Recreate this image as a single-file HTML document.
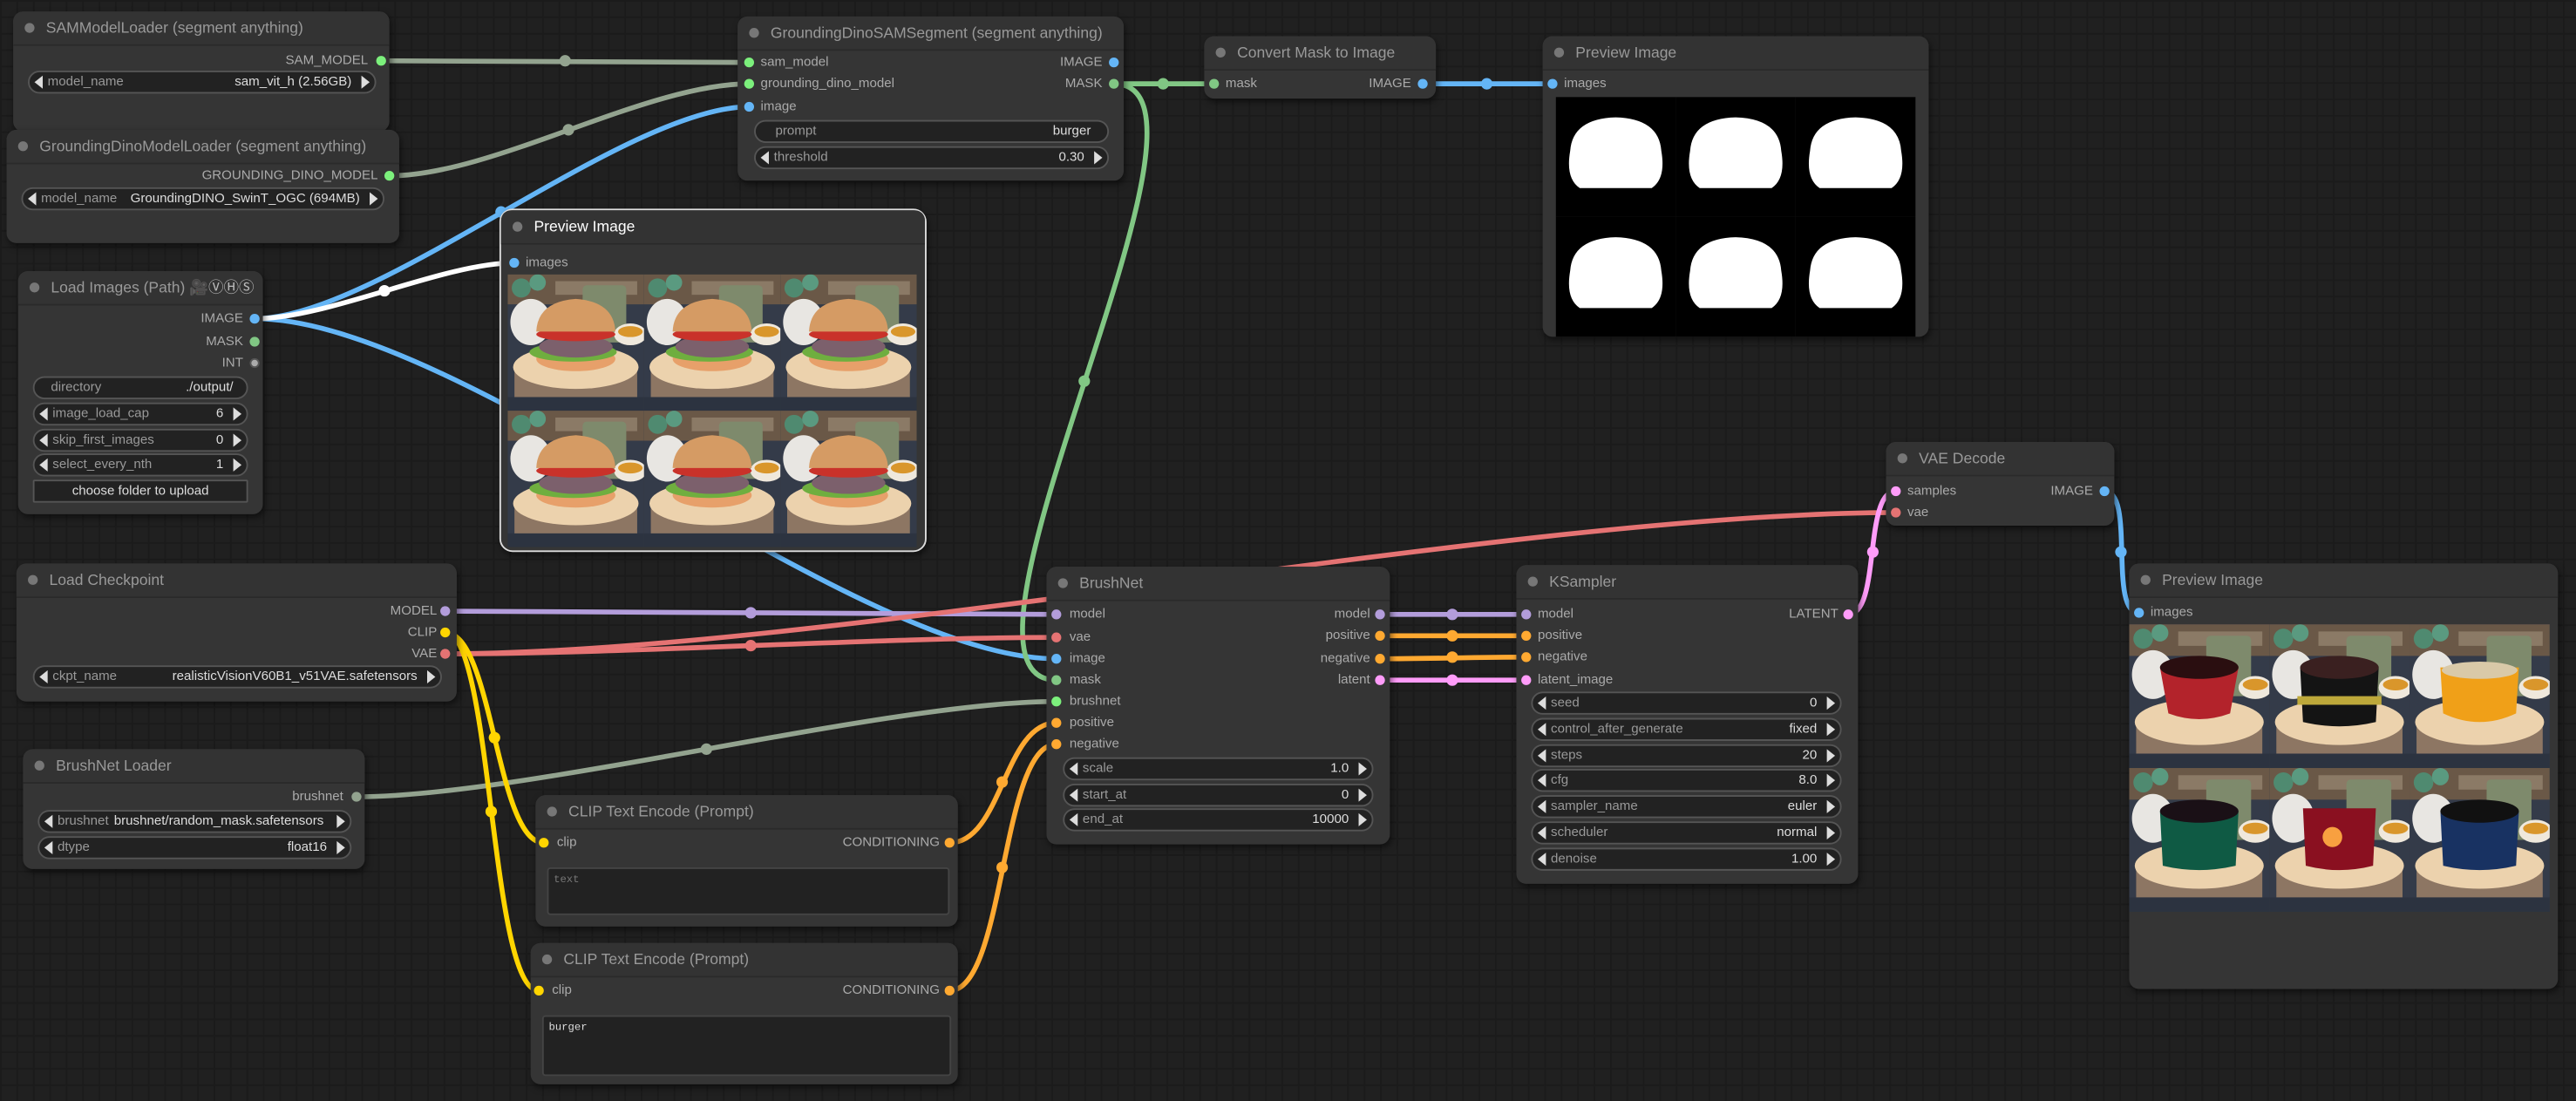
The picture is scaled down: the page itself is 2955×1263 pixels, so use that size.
<!DOCTYPE html>
<html><head><meta charset="utf-8"><style>
html,body{margin:0;padding:0;background:#202020;overflow:hidden;width:2955px;height:1262px}
#w{position:absolute;left:0;top:0;width:1568px;height:670px;transform:scale(1.884566);transform-origin:0 0;font-family:"Liberation Sans",sans-serif;
background-color:#202020;background-image:linear-gradient(#1b1b1b 1px,transparent 1px),linear-gradient(90deg,#1b1b1b 1px,transparent 1px);background-size:10px 10px}
.n{position:absolute;z-index:1;background:#353535;border-radius:6px;box-shadow:1px 2px 4px rgba(0,0,0,.5)}
.n .t{position:absolute;left:0;right:0;top:0;height:20px;background:#333;border-bottom:1px solid #2a2a2a;border-radius:6px 6px 0 0;color:#999;font-size:9.3px;line-height:20px;padding-left:20px;white-space:nowrap}
.n .t:before{content:"";position:absolute;left:7px;top:7px;width:6px;height:6px;border-radius:50%;background:#777}
.d{position:absolute;width:6px;height:6px;border-radius:50%;margin:-3px 0 0 -3px;z-index:3}
.l{position:absolute;font-size:8px;color:#aaa;line-height:10px;margin-top:-5px;white-space:nowrap;z-index:3}
.w{position:absolute;height:12px;background:#222;border:1px solid #555;border-radius:7px;font-size:8px;line-height:12px;color:#999;white-space:nowrap;z-index:3}
.w .a{position:absolute;left:11px}.w .v{position:absolute;right:14px;color:#ddd}
.w:before{content:"";position:absolute;left:3px;top:2px;border:4px solid transparent;border-right:5px solid #ddd;border-left:0}
.w:after{content:"";position:absolute;right:3px;top:2px;border:4px solid transparent;border-left:5px solid #ddd;border-right:0}
.w.nt:before,.w.nt:after{display:none}
.ta{position:absolute;z-index:3;background:#222;border:1px solid #444;border-radius:2px;color:#bbb;font-family:"Liberation Mono",monospace;font-size:6.5px;padding:3px}
svg.links{position:absolute;left:0;top:0;z-index:0}
</style></head><body><div id="w">
<svg width="0" height="0" style="position:absolute">
<defs>
<g id="bg">
<rect width="100" height="100" fill="#343b49"/>
<rect width="100" height="22" fill="#6a5847"/>
<rect x="35" y="5" width="60" height="10" fill="#8b7a66"/>
<ellipse cx="17" cy="35" rx="15" ry="17" fill="#e8e6e2"/>
<circle cx="10" cy="10" r="7" fill="#4f8a70"/><circle cx="22" cy="6" r="6" fill="#5a9a80"/>
<rect x="55" y="8" width="32" height="42" rx="3" fill="#7e8a6c"/>
<ellipse cx="90" cy="44" rx="12" ry="8" fill="#efe8dc"/><ellipse cx="90" cy="42" rx="9" ry="4" fill="#d9962b"/>
<rect x="5" y="68" width="90" height="22" fill="#8d7663"/>
<ellipse cx="50" cy="68" rx="46" ry="16" fill="#ecd2ad"/>
<rect x="0" y="90" width="100" height="10" fill="#2c3340"/>
</g>
<g id="bur"><use href="#bg"/>
<ellipse cx="50" cy="62" rx="29" ry="9" fill="#e7a06a"/>
<ellipse cx="48" cy="57" rx="32" ry="7" fill="#6fae3f"/>
<ellipse cx="50" cy="53" rx="27" ry="8" fill="#7c606c"/>
<ellipse cx="50" cy="44" rx="29" ry="5" fill="#c9322a"/>
<path d="M21 42 Q22 20 50 18 Q78 20 79 42 Z" fill="#d59b64"/>
</g>
<g id="mask"><rect width="100" height="100" fill="#000"/>
<path d="M12 45 Q14 18 50 17 Q86 18 88 45 Q92 68 80 76 L20 76 Q8 68 12 45Z" fill="#fff"/></g>
</defs></svg>

<svg class="links" width="1568" height="670" fill="none" stroke-width="3" stroke-linecap="round">
<path d="M232 37 C288 37 400 38 456 38" stroke="#93a38f"/>
<path d="M237 107 C300 107 393 51 456 51" stroke="#93a38f"/>
<path d="M217 485 C320 485 540 427 643 427" stroke="#93a38f"/>
<path d="M155 194 C230 194 380 65 456 65" stroke="#64b5f6"/>
<path d="M155 194 C280 194 520 401 643 401" stroke="#64b5f6"/>
<path d="M155 194 C200 194 270 160 313 160" stroke="#fff"/>
<path d="M678 51 C700 51 717 51 739 51" stroke="#81c784"/>
<path d="M678 51 C760 51 560 414 643 414" stroke="#81c784"/>
<path d="M866 51 C890 51 921 51 945 51" stroke="#64b5f6"/>
<path d="M271 372 C380 372 534 374 643 374" stroke="#b39ddb"/>
<path d="M271 398 C380 398 534 388 643 388" stroke="#e57373"/>
<path d="M271 398 C500 398 924 312 1154 312" stroke="#e57373"/>
<path d="M271 385 C300 385 302 513 331 513" stroke="#ffd500"/>
<path d="M271 385 C300 385 298 603 328 603" stroke="#ffd500"/>
<path d="M578 513 C610 513 611 440 643 440" stroke="#ffa931"/>
<path d="M578 603 C612 603 609 453 643 453" stroke="#ffa931"/>
<path d="M840 374 C870 374 898 374 929 374" stroke="#b39ddb"/>
<path d="M840 387 C870 387 898 387 929 387" stroke="#ffa931"/>
<path d="M840 401 C870 401 898 400 929 400" stroke="#ffa931"/>
<path d="M840 414 C870 414 898 414 929 414" stroke="#ff9cf9"/>
<path d="M1125 374 C1145 374 1134 299 1154 299" stroke="#ff9cf9"/>
<path d="M1281 299 C1300 299 1283 373 1302 373" stroke="#64b5f6"/>
<g stroke="none">
<circle cx="344" cy="37" r="3.5" fill="#93a38f"/><circle cx="346" cy="79" r="3.5" fill="#93a38f"/><circle cx="430" cy="456" r="3.5" fill="#93a38f"/>
<circle cx="305" cy="129" r="3.5" fill="#64b5f6"/><circle cx="234" cy="177" r="3.5" fill="#fff"/>
<circle cx="708" cy="51" r="3.5" fill="#81c784"/><circle cx="660" cy="232" r="3.5" fill="#81c784"/><circle cx="905" cy="51" r="3.5" fill="#64b5f6"/>
<circle cx="457" cy="373" r="3.5" fill="#b39ddb"/><circle cx="457" cy="393" r="3.5" fill="#e57373"/>
<circle cx="301" cy="449" r="3.5" fill="#ffd500"/><circle cx="299" cy="494" r="3.5" fill="#ffd500"/>
<circle cx="610" cy="476" r="3.5" fill="#ffa931"/><circle cx="610" cy="528" r="3.5" fill="#ffa931"/>
<circle cx="884" cy="374" r="3.5" fill="#b39ddb"/><circle cx="884" cy="387" r="3.5" fill="#ffa931"/><circle cx="884" cy="400" r="3.5" fill="#ffa931"/><circle cx="884" cy="414" r="3.5" fill="#ff9cf9"/>
<circle cx="1140" cy="336" r="3.5" fill="#ff9cf9"/><circle cx="1291" cy="336" r="3.5" fill="#64b5f6"/>
</g>
</svg>

<div class="n" style="left:8px;top:7px;width:229px;height:73px"><div class="t">SAMModelLoader (segment anything)</div></div>
<div class="l" style="right:1344px;top:37px">SAM_MODEL</div><div class="d" style="left:232px;top:37px;background:#7cf07c"></div>
<div class="w" style="left:17px;top:43px;width:210px"><span class="a">model_name</span><span class="v">sam_vit_h (2.56GB)</span></div>

<div class="n" style="left:4px;top:79px;width:239px;height:69px"><div class="t">GroundingDinoModelLoader (segment anything)</div></div>
<div class="l" style="right:1338px;top:107px">GROUNDING_DINO_MODEL</div><div class="d" style="left:237px;top:107px;background:#7cf07c"></div>
<div class="w" style="left:13px;top:114px;width:219px"><span class="a">model_name</span><span class="v">GroundingDINO_SwinT_OGC (694MB)</span></div>

<div class="n" style="left:449px;top:10px;width:235px;height:100px"><div class="t">GroundingDinoSAMSegment (segment anything)</div></div>
<div class="d" style="left:456px;top:38px;background:#7cf07c"></div><div class="l" style="left:463px;top:38px">sam_model</div>
<div class="d" style="left:456px;top:51px;background:#7cf07c"></div><div class="l" style="left:463px;top:51px">grounding_dino_model</div>
<div class="d" style="left:456px;top:65px;background:#64b5f6"></div><div class="l" style="left:463px;top:65px">image</div>
<div class="l" style="right:897px;top:38px">IMAGE</div><div class="d" style="left:678px;top:38px;background:#64b5f6"></div>
<div class="l" style="right:897px;top:51px">MASK</div><div class="d" style="left:678px;top:51px;background:#81c784"></div>
<div class="w nt" style="left:459px;top:73px;width:214px"><span class="a" style="left:12px">prompt</span><span class="v" style="right:10px">burger</span></div>
<div class="w" style="left:459px;top:89px;width:214px"><span class="a">threshold</span><span class="v">0.30</span></div>

<div class="n" style="left:733px;top:22px;width:141px;height:38px"><div class="t">Convert Mask to Image</div></div>
<div class="d" style="left:739px;top:51px;background:#81c784"></div><div class="l" style="left:746px;top:51px">mask</div>
<div class="l" style="right:709px;top:51px">IMAGE</div><div class="d" style="left:866px;top:51px;background:#64b5f6"></div>

<div class="n" style="left:939px;top:22px;width:235px;height:183px"><div class="t">Preview Image</div></div>
<div class="d" style="left:945px;top:51px;background:#64b5f6"></div><div class="l" style="left:952px;top:51px">images</div>
<svg style="position:absolute;left:947px;top:59px;z-index:3" width="219" height="146" viewBox="0 0 300 200" preserveAspectRatio="none">
<use href="#mask"/><use href="#mask" x="100"/><use href="#mask" x="200"/><use href="#mask" y="100"/><use href="#mask" x="100" y="100"/><use href="#mask" x="200" y="100"/></svg>

<div class="n" style="left:11px;top:165px;width:149px;height:148px"><div class="t">Load Images (Path) 🎥<span style="color:#bbb">ⓋⒽⓈ</span></div></div>
<div class="l" style="right:1420px;top:194px">IMAGE</div><div class="d" style="left:155px;top:194px;background:#64b5f6"></div>
<div class="l" style="right:1420px;top:208px">MASK</div><div class="d" style="left:155px;top:208px;background:#81c784"></div>
<div class="l" style="right:1420px;top:221px">INT</div><div class="d" style="left:155px;top:221px;background:#aaa;border:1px solid #555;width:4px;height:4px"></div>
<div class="w nt" style="left:20px;top:229px;width:129px"><span class="a" style="left:10px">directory</span><span class="v" style="right:8px">./output/</span></div>
<div class="w" style="left:20px;top:245px;width:129px"><span class="a">image_load_cap</span><span class="v">6</span></div>
<div class="w" style="left:20px;top:261px;width:129px"><span class="a">skip_first_images</span><span class="v">0</span></div>
<div class="w" style="left:20px;top:276px;width:129px"><span class="a">select_every_nth</span><span class="v">1</span></div>
<div class="w nt" style="left:20px;top:292px;width:129px;border-radius:1px;text-align:center;color:#ddd">choose folder to upload</div>

<div class="n" style="left:304px;top:127px;width:258px;height:207px;border:1px solid #ddd;border-radius:8px"><div class="t" style="color:#fff">Preview Image</div></div>
<div class="d" style="left:313px;top:160px;background:#64b5f6"></div><div class="l" style="left:320px;top:160px">images</div>
<svg style="position:absolute;left:309px;top:167px;z-index:3" width="249" height="166" viewBox="0 0 300 200" preserveAspectRatio="none">
<use href="#bur"/><use href="#bur" x="100"/><use href="#bur" x="200"/><use href="#bur" y="100"/><use href="#bur" x="100" y="100"/><use href="#bur" x="200" y="100"/></svg>

<div class="n" style="left:10px;top:343px;width:268px;height:84px"><div class="t">Load Checkpoint</div></div>
<div class="l" style="right:1302px;top:372px">MODEL</div><div class="d" style="left:271px;top:372px;background:#b39ddb"></div>
<div class="l" style="right:1302px;top:385px">CLIP</div><div class="d" style="left:271px;top:385px;background:#ffd500"></div>
<div class="l" style="right:1302px;top:398px">VAE</div><div class="d" style="left:271px;top:398px;background:#e57373"></div>
<div class="w" style="left:20px;top:405px;width:247px"><span class="a">ckpt_name</span><span class="v">realisticVisionV60B1_v51VAE.safetensors</span></div>

<div class="n" style="left:14px;top:456px;width:208px;height:73px"><div class="t">BrushNet Loader</div></div>
<div class="l" style="right:1359px;top:485px">brushnet</div><div class="d" style="left:217px;top:485px;background:#93a38f"></div>
<div class="w" style="left:23px;top:493px;width:189px"><span class="a">brushnet</span><span class="v" style="color:#ddd;right:16px">brushnet/random_mask.safetensors</span></div>
<div class="w" style="left:23px;top:509px;width:189px"><span class="a">dtype</span><span class="v">float16</span></div>

<div class="n" style="left:326px;top:484px;width:257px;height:80px"><div class="t">CLIP Text Encode (Prompt)</div></div>
<div class="d" style="left:331px;top:513px;background:#ffd500"></div><div class="l" style="left:339px;top:513px">clip</div>
<div class="l" style="right:996px;top:513px">CONDITIONING</div><div class="d" style="left:578px;top:513px;background:#ffa931"></div>
<div class="ta" style="left:333px;top:528px;width:237px;height:21px;color:#777">text</div>

<div class="n" style="left:323px;top:574px;width:260px;height:86px"><div class="t">CLIP Text Encode (Prompt)</div></div>
<div class="d" style="left:328px;top:603px;background:#ffd500"></div><div class="l" style="left:336px;top:603px">clip</div>
<div class="l" style="right:996px;top:603px">CONDITIONING</div><div class="d" style="left:578px;top:603px;background:#ffa931"></div>
<div class="ta" style="left:330px;top:618px;width:241px;height:29px;color:#ddd">burger</div>

<div class="n" style="left:637px;top:345px;width:209px;height:169px"><div class="t">BrushNet</div></div>
<div class="d" style="left:643px;top:374px;background:#b39ddb"></div><div class="l" style="left:651px;top:374px">model</div>
<div class="d" style="left:643px;top:388px;background:#e57373"></div><div class="l" style="left:651px;top:388px">vae</div>
<div class="d" style="left:643px;top:401px;background:#64b5f6"></div><div class="l" style="left:651px;top:401px">image</div>
<div class="d" style="left:643px;top:414px;background:#81c784"></div><div class="l" style="left:651px;top:414px">mask</div>
<div class="d" style="left:643px;top:427px;background:#7cf07c"></div><div class="l" style="left:651px;top:427px">brushnet</div>
<div class="d" style="left:643px;top:440px;background:#ffa931"></div><div class="l" style="left:651px;top:440px">positive</div>
<div class="d" style="left:643px;top:453px;background:#ffa931"></div><div class="l" style="left:651px;top:453px">negative</div>
<div class="l" style="right:734px;top:374px">model</div><div class="d" style="left:840px;top:374px;background:#b39ddb"></div>
<div class="l" style="right:734px;top:387px">positive</div><div class="d" style="left:840px;top:387px;background:#ffa931"></div>
<div class="l" style="right:734px;top:401px">negative</div><div class="d" style="left:840px;top:401px;background:#ffa931"></div>
<div class="l" style="right:734px;top:414px">latent</div><div class="d" style="left:840px;top:414px;background:#ff9cf9"></div>
<div class="w" style="left:647px;top:461px;width:187px"><span class="a">scale</span><span class="v">1.0</span></div>
<div class="w" style="left:647px;top:477px;width:187px"><span class="a">start_at</span><span class="v">0</span></div>
<div class="w" style="left:647px;top:492px;width:187px"><span class="a">end_at</span><span class="v">10000</span></div>

<div class="n" style="left:923px;top:344px;width:208px;height:194px"><div class="t">KSampler</div></div>
<div class="d" style="left:929px;top:374px;background:#b39ddb"></div><div class="l" style="left:936px;top:374px">model</div>
<div class="d" style="left:929px;top:387px;background:#ffa931"></div><div class="l" style="left:936px;top:387px">positive</div>
<div class="d" style="left:929px;top:400px;background:#ffa931"></div><div class="l" style="left:936px;top:400px">negative</div>
<div class="d" style="left:929px;top:414px;background:#ff9cf9"></div><div class="l" style="left:936px;top:414px">latent_image</div>
<div class="l" style="right:449px;top:374px">LATENT</div><div class="d" style="left:1125px;top:374px;background:#ff9cf9"></div>
<div class="w" style="left:932px;top:421px;width:187px"><span class="a">seed</span><span class="v">0</span></div>
<div class="w" style="left:932px;top:437px;width:187px"><span class="a">control_after_generate</span><span class="v">fixed</span></div>
<div class="w" style="left:932px;top:453px;width:187px"><span class="a">steps</span><span class="v">20</span></div>
<div class="w" style="left:932px;top:468px;width:187px"><span class="a">cfg</span><span class="v">8.0</span></div>
<div class="w" style="left:932px;top:484px;width:187px"><span class="a">sampler_name</span><span class="v">euler</span></div>
<div class="w" style="left:932px;top:500px;width:187px"><span class="a">scheduler</span><span class="v">normal</span></div>
<div class="w" style="left:932px;top:516px;width:187px"><span class="a">denoise</span><span class="v">1.00</span></div>

<div class="n" style="left:1148px;top:269px;width:139px;height:51px"><div class="t">VAE Decode</div></div>
<div class="d" style="left:1154px;top:299px;background:#ff9cf9"></div><div class="l" style="left:1161px;top:299px">samples</div>
<div class="d" style="left:1154px;top:312px;background:#e57373"></div><div class="l" style="left:1161px;top:312px">vae</div>
<div class="l" style="right:294px;top:299px">IMAGE</div><div class="d" style="left:1281px;top:299px;background:#64b5f6"></div>

<div class="n" style="left:1296px;top:343px;width:261px;height:259px"><div class="t">Preview Image</div></div>
<div class="d" style="left:1302px;top:373px;background:#64b5f6"></div><div class="l" style="left:1309px;top:373px">images</div>
<svg style="position:absolute;left:1296px;top:380px;z-index:3" width="256" height="175" viewBox="0 0 300 200" preserveAspectRatio="none">
<use href="#bg"/><use href="#bg" x="100"/><use href="#bg" x="200"/><use href="#bg" y="100"/><use href="#bg" x="100" y="100"/><use href="#bg" x="200" y="100"/>
<path d="M22 30 L78 30 L72 62 Q50 70 28 62 Z" fill="#b3232b"/><ellipse cx="50" cy="30" rx="28" ry="8" fill="#2a0e10"/>
<path d="M122 30 L178 30 L176 68 Q150 74 124 68 Z" fill="#141414"/><ellipse cx="150" cy="30" rx="28" ry="8" fill="#3a2020"/><rect x="120" y="50" width="60" height="6" fill="#bda83a"/>
<path d="M222 30 L278 30 L276 62 Q250 74 224 62 Z" fill="#f0a018"/><ellipse cx="250" cy="32" rx="27" ry="6" fill="#d9c9a8"/>
<path d="M22 130 L78 130 L76 168 Q50 174 24 168 Z" fill="#0f5a44"/><ellipse cx="50" cy="130" rx="28" ry="8" fill="#1a1016"/>
<path d="M124 128 L176 128 L174 168 Q150 174 126 168 Z" fill="#8a1020"/><circle cx="145" cy="148" r="7" fill="#f8a040"/>
<path d="M222 130 L278 130 L276 168 Q250 174 224 168 Z" fill="#183262"/><ellipse cx="250" cy="130" rx="28" ry="8" fill="#111"/>
</svg>
</div></body></html>
